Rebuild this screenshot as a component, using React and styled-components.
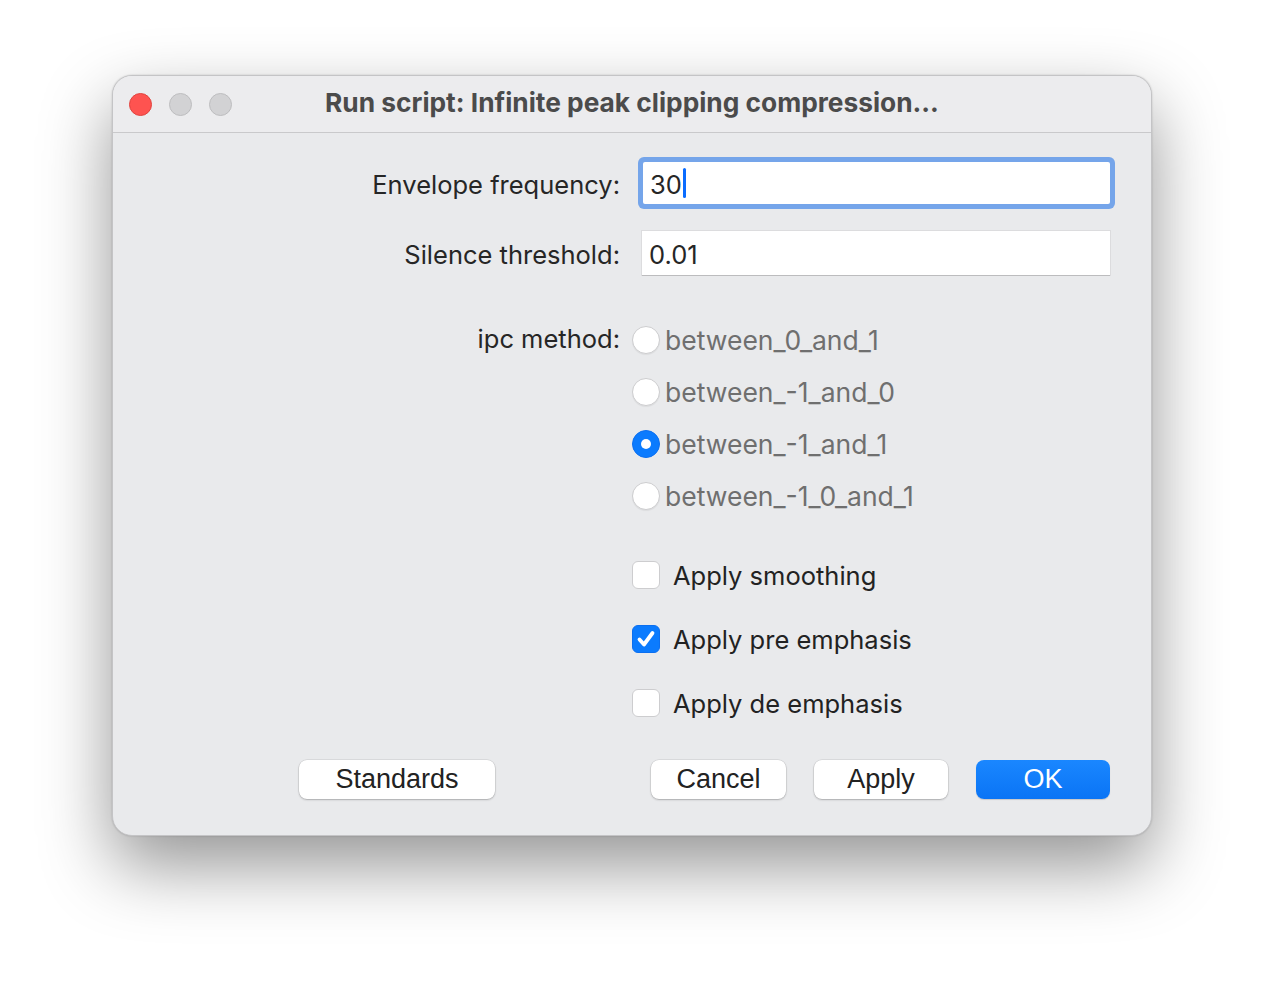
import React from 'react';
import styled, { createGlobalStyle } from 'styled-components';

const GlobalStyle = createGlobalStyle`
  html, body {
    margin: 0;
    padding: 0;
    background: #ffffff;
  }
  body {
    font-family: Inter, "Liberation Sans", sans-serif;
    -webkit-font-smoothing: antialiased;
  }
`;

const Page = styled.div`
  width: 1264px;
  height: 984px;
  padding: 75px 0 0 112px;
  box-sizing: border-box;
`;

const Window = styled.div`
  width: 1040px;
  height: 761px;
  box-sizing: border-box;
  background: #e9eaec;
  border-radius: 20px;
  border: 1px solid #c4c4c6;
  box-shadow: 0 30px 70px rgba(0, 0, 0, 0.42), 0 0 2px rgba(0, 0, 0, 0.2);
  overflow: hidden;
  display: flex;
  flex-direction: column;
`;

const TitleBar = styled.div`
  height: 56px;
  flex: none;
  display: flex;
  align-items: center;
  padding-left: 16px;
  background: #ececee;
  border-bottom: 1px solid #c9c9cb;
  position: relative;
`;

const Light = styled.span`
  width: 23px;
  height: 23px;
  border-radius: 50%;
  margin-right: 17px;
  box-sizing: border-box;
  background: ${(p) => (p.$red ? '#fe5350' : '#d2d2d4')};
  border: 1px solid ${(p) => (p.$red ? '#e0443f' : '#bdbdbf')};
`;

const Title = styled.div`
  position: absolute;
  left: 0;
  right: 0;
  top: 0;
  bottom: 0;
  display: flex;
  align-items: center;
  justify-content: center;
  font-size: 26.3px;
  font-weight: 700;
  color: #4b4b4b;
  padding-bottom: 3px;
  pointer-events: none;
`;

const Body = styled.div`
  flex: 1;
  padding: 29px 41px 0 0;
  display: flex;
  flex-direction: column;
`;

const Row = styled.div`
  display: grid;
  grid-template-columns: 507px 1fr;
  column-gap: 22px;
  align-items: ${(p) => p.$align || 'center'};
  margin-top: ${(p) => p.$top || 0}px;
`;

const Label = styled.div`
  text-align: right;
  font-size: 25.5px;
  color: #262626;
  line-height: 1;
  padding-top: ${(p) => p.$pad ?? 3}px;
`;

const TextField = styled.div`
  height: ${(p) => (p.$focused ? 42 : 44)}px;
  margin-left: ${(p) => (p.$focused ? 1 : 0)}px;
  background: #ffffff;
  box-sizing: border-box;
  display: flex;
  align-items: center;
  padding-left: 7px;
  padding-top: 2px;
  font-size: 25.5px;
  color: #262626;
  border-radius: ${(p) => (p.$focused ? '2px' : '0')};
  box-shadow: ${(p) =>
    p.$focused
      ? '0 0 0 5px #75a5ea'
      : '0 1px 0 #bcbcbe, 0 0 0 1px #dcdcde'};
`;

const Caret = styled.span`
  display: inline-block;
  width: 3px;
  height: 30px;
  border-radius: 2px;
  background: #0a6cff;
  margin-left: 1px;
  margin-top: -2px;
`;

const OptionList = styled.div`
  display: flex;
  flex-direction: column;
  margin-left: -10px;
`;

const RadioRow = styled.label`
  height: 52px;
  display: flex;
  align-items: center;
  font-size: 26.5px;
  color: #6f6f6f;
`;

const RadioDot = styled.span`
  width: 28px;
  height: 28px;
  border-radius: 50%;
  box-sizing: border-box;
  margin-right: 5px;
  display: flex;
  align-items: center;
  justify-content: center;
  background: ${(p) => (p.$on ? '#0b7bfe' : '#ffffff')};
  border: 1px solid ${(p) => (p.$on ? '#0b6ff0' : '#cdcdcf')};
  box-shadow: ${(p) => (p.$on ? 'none' : '0 1px 1px rgba(0,0,0,0.06)')};

  &::after {
    content: '';
    width: 10px;
    height: 10px;
    border-radius: 50%;
    background: #ffffff;
    display: ${(p) => (p.$on ? 'block' : 'none')};
  }
`;

const CheckRow = styled.label`
  height: 40px;
  display: flex;
  align-items: center;
  font-size: 25.5px;
  color: #222222;
  margin-top: ${(p) => p.$top || 0}px;
`;

const Box = styled.span`
  width: 28px;
  height: 28px;
  border-radius: 6px;
  box-sizing: border-box;
  margin-right: 13px;
  display: flex;
  align-items: center;
  justify-content: center;
  background: ${(p) => (p.$on ? '#0b7bfe' : '#ffffff')};
  border: 1px solid ${(p) => (p.$on ? '#0b6ff0' : '#cdcdcf')};
`;

const ButtonBar = styled.div`
  display: flex;
  align-items: center;
  margin-top: 37px;
  padding-left: 186px;
`;

const Button = styled.button`
  height: 39px;
  width: ${(p) => p.$w}px;
  margin-left: ${(p) => p.$gap || 0}px;
  border: none;
  border-radius: 8px;
  font-family: "Liberation Sans Narrow", "Liberation Sans", sans-serif;
  font-size: 27px;
  padding: 0;
  color: ${(p) => (p.$primary ? '#ffffff' : '#222222')};
  background: ${(p) =>
    p.$primary ? 'linear-gradient(#1a87ff, #0a74f5)' : '#ffffff'};
  box-shadow: ${(p) =>
    p.$primary
      ? '0 1px 1px rgba(0,0,0,0.15)'
      : '0 0 0 0.5px rgba(0,0,0,0.12), 0 1px 2px rgba(0,0,0,0.22)'};
`;

const Spacer = styled.div`
  flex: 1;
`;

const CheckMark = () => (
  <svg width="22" height="22" viewBox="0 0 22 22">
    <path
      d="M4.5 11.5 L9 16.5 L17.5 5"
      fill="none"
      stroke="#ffffff"
      strokeWidth="3.8"
      strokeLinecap="round"
      strokeLinejoin="round"
    />
  </svg>
);

const methods = [
  'between_0_and_1',
  'between_-1_and_0',
  'between_-1_and_1',
  'between_-1_0_and_1',
];

const checks = [
  { label: 'Apply smoothing', on: false },
  { label: 'Apply pre emphasis', on: true },
  { label: 'Apply de emphasis', on: false },
];

const App = () => {
  return (
    <Page>
      <GlobalStyle />
      <Window>
        <TitleBar>
          <Light $red />
          <Light />
          <Light />
          <Title>Run script: Infinite peak clipping compression...</Title>
        </TitleBar>
        <Body>
          <Row>
            <Label>Envelope frequency:</Label>
            <TextField $focused>
              30<Caret />
            </TextField>
          </Row>

          <Row $top={27}>
            <Label>Silence threshold:</Label>
            <TextField>0.01</TextField>
          </Row>

          <Row $top={39} $align="start">
            <Label $pad={12}>ipc method:</Label>
            <OptionList>
              {methods.map((m, i) => (
                <RadioRow key={m}>
                  <RadioDot $on={i === 2} />
                  {m}
                </RadioRow>
              ))}
            </OptionList>
          </Row>

          <Row $top={33} $align="start">
            <div />
            <OptionList>
              {checks.map((c, i) => (
                <CheckRow key={c.label} $top={i ? 24 : 0}>
                  <Box $on={c.on}>{c.on && <CheckMark />}</Box>
                  {c.label}
                </CheckRow>
              ))}
            </OptionList>
          </Row>

          <ButtonBar>
            <Button $w={196}>Standards</Button>
            <Spacer />
            <Button $w={135}>Cancel</Button>
            <Button $w={134} $gap={28}>Apply</Button>
            <Button $w={134} $gap={28} $primary>OK</Button>
          </ButtonBar>
        </Body>
      </Window>
    </Page>
  );
};

export default App;
